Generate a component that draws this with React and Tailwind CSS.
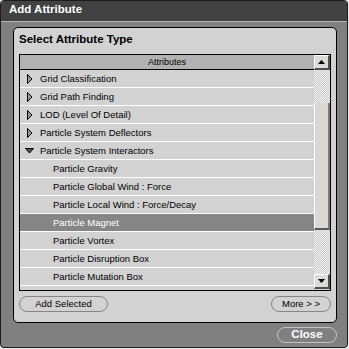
import React from 'react';

const rows = [
  { label: 'Grid Classification', level: 0, state: 'closed' },
  { label: 'Grid Path Finding', level: 0, state: 'closed' },
  { label: 'LOD (Level Of Detail)', level: 0, state: 'closed' },
  { label: 'Particle System Deflectors', level: 0, state: 'closed' },
  { label: 'Particle System Interactors', level: 0, state: 'open' },
  { label: 'Particle Gravity', level: 1 },
  { label: 'Particle Global Wind : Force', level: 1 },
  { label: 'Particle Local Wind : Force/Decay', level: 1 },
  { label: 'Particle Magnet', level: 1, selected: true },
  { label: 'Particle Vortex', level: 1 },
  { label: 'Particle Disruption Box', level: 1 },
  { label: 'Particle Mutation Box', level: 1 },
];

const ClosedArrow = () => (
  <svg width="6" height="10" viewBox="0 0 6 10" className="shrink-0">
    <polygon points="0.5,0.5 5,5 0.5,9.5" fill="#9a9a9a" stroke="#000" strokeWidth="1" />
  </svg>
);

const OpenArrow = () => (
  <svg width="9" height="6" viewBox="0 0 9 6" className="shrink-0">
    <polygon points="0.5,0.5 8.5,0.5 4.5,5" fill="#505050" stroke="#000" strokeWidth="1" />
  </svg>
);

const ScrollButton = ({ up }) => (
  <div className="h-[15px] w-full bg-[#dcdcd4] border-t border-l border-t-white border-l-white border-r-2 border-b-2 border-r-[#505050] border-b-[#505050] flex items-center justify-center">
    <svg width="7" height="4" viewBox="0 0 7 4">
      {up ? <polygon points="3.5,0 7,4 0,4" fill="#000" /> : <polygon points="0,0 7,0 3.5,4" fill="#000" />}
    </svg>
  </div>
);

const checker =
  'bg-[image:repeating-conic-gradient(#c6c6c6_0%_25%,#f6f6f6_0%_50%)] bg-[length:2px_2px]';

const App = () => {
  return (
    <div className="w-[349px] h-[349px] bg-[#e8e8e8] font-['Liberation_Sans',Arial,sans-serif]">
      <div className="w-[348px] h-[348px] bg-[#808080] border border-[#1c1c1c] rounded-[4px] overflow-hidden flex flex-col">
        <div className="h-[20px] shrink-0 bg-[#424242] flex items-center pl-[8px] pb-[2px]">
          <span className="text-white font-bold text-[11.5px] leading-none">Add Attribute</span>
        </div>
        <div className="h-[1px] shrink-0 bg-[#b4b4b4]" />

        <div className="ml-[12px] mt-[5px] w-[324px] h-[296px] shrink-0 bg-[#d2d2d2] border border-black rounded-[5px] flex flex-col">
          <div className="h-[26px] flex items-center pl-[5px] pb-[2px]">
            <span className="text-black font-bold text-[11.5px] leading-none">Select Attribute Type</span>
          </div>

          <div className="ml-[5px] w-[312px] h-[237px] border border-black flex overflow-hidden">
            <div className="w-[294px] flex flex-col overflow-hidden">
              <div className="h-[15px] shrink-0 bg-[#b2b2b2] border-b border-black flex items-center justify-center">
                <span className="text-[9px] leading-none text-black">Attributes</span>
              </div>
              {rows.map((row) => (
                <div
                  key={row.label}
                  className={`h-[18px] shrink-0 border-b border-white flex items-center ${
                    row.selected ? 'bg-[#868686] text-white' : 'bg-[#d2d2d2] text-black'
                  }`}
                >
                  {row.level === 0 ? (
                    <>
                      <div className={`w-[20px] flex items-center ${row.state === 'open' ? 'pl-[5px]' : 'pl-[7px]'}`}>
                        {row.state === 'open' ? <OpenArrow /> : <ClosedArrow />}
                      </div>
                      <span className="text-[9.5px] leading-none">{row.label}</span>
                    </>
                  ) : (
                    <span className="pl-[33px] text-[9.5px] leading-none">{row.label}</span>
                  )}
                </div>
              ))}
            </div>

            <div className="w-[16px] flex flex-col">
              <ScrollButton up />
              <div className={`h-[33px] ${checker}`} />
              <div className="h-[127px] bg-[#d9d9d1] border-l border-l-white border-r-2 border-r-[#7a7a7a] border-b-2 border-b-[#5a5a5a]" />
              <div className={`h-[44px] ${checker}`} />
              <ScrollButton />
            </div>
          </div>

          <div className="mt-[5px] px-[5px] flex justify-between">
            <button className="w-[89px] h-[16px] rounded-full border border-[#858585] bg-[#d2d2d2] text-[9.5px] leading-none text-black flex items-center justify-center">
              Add Selected
            </button>
            <button className="w-[60px] h-[16px] rounded-full border border-[#858585] bg-[#d2d2d2] text-[9.5px] leading-none text-black flex items-center justify-center">
              More &gt; &gt;
            </button>
          </div>
        </div>

        <div className="mt-[4px] flex justify-end pr-[10px]">
          <button className="w-[60px] h-[16px] rounded-full border border-[#c4c4c4] bg-[#808080] text-white font-bold text-[11.5px] leading-none flex items-center justify-center">
            Close
          </button>
        </div>
      </div>
    </div>
  );
};

export default App;
